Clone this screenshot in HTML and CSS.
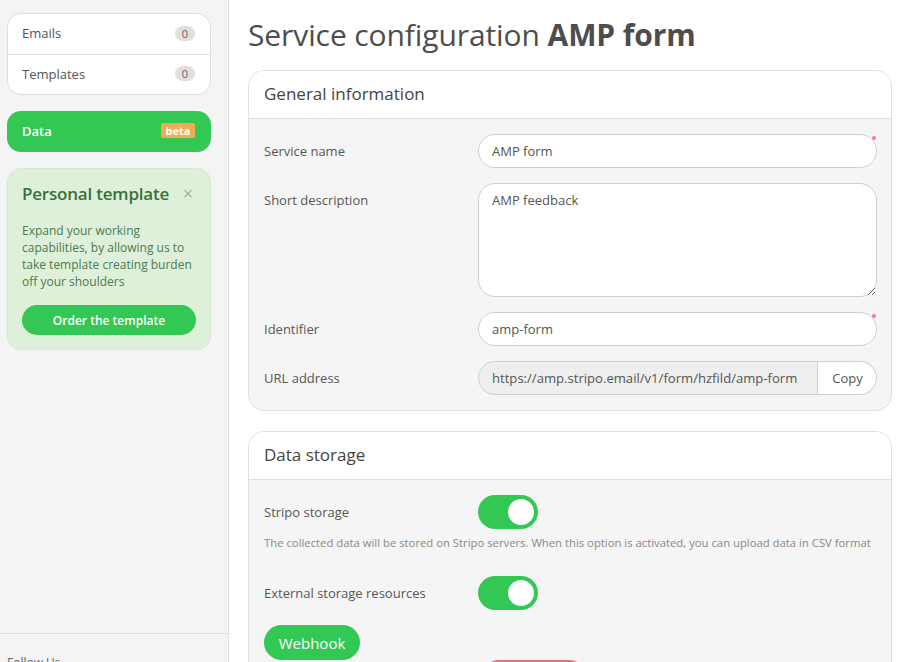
FILE: index.html
```html
<!DOCTYPE html>
<html lang="en">
<head>
<meta charset="utf-8">
<title>Service configuration AMP form</title>
<link rel="stylesheet" href="styles.css">
</head>
<body>
<aside class="sidebar">
  <nav class="nav-card">
    <a class="nav-item">Emails <span class="count">0</span></a>
    <a class="nav-item">Templates <span class="count">0</span></a>
  </nav>
  <a class="nav-data">Data <span class="beta">beta</span></a>
  <div class="promo">
    <div class="promo-head">
      <span class="promo-title">Personal template</span>
      <span class="promo-close">&times;</span>
    </div>
    <p class="promo-text">Expand your working capabilities, by allowing us to take template creating burden off your shoulders</p>
    <button class="promo-btn">Order the template</button>
  </div>
  <div class="sidebar-foot">Follow Us</div>
</aside>
<main class="main">
  <h1 class="page-title">Service configuration <b>AMP form</b></h1>

  <section class="card">
    <header class="card-head">General information</header>
    <div class="card-body form">
      <label class="lbl">Service name</label>
      <div class="field req"><input class="inp" value="AMP form"></div>

      <label class="lbl">Short description</label>
      <div class="field"><textarea class="inp area">AMP feedback</textarea></div>

      <label class="lbl">Identifier</label>
      <div class="field req"><input class="inp" value="amp-form"></div>

      <label class="lbl">URL address</label>
      <div class="field group">
        <input class="inp inp-dis" value="https://amp.stripo.email/v1/form/hzfild/amp-form" disabled>
        <button class="copy">Copy</button>
      </div>
    </div>
  </section>

  <section class="card">
    <header class="card-head">Data storage</header>
    <div class="card-body">
      <div class="form">
        <label class="lbl">Stripo storage</label>
        <div class="field"><span class="toggle on"><span class="knob"></span></span></div>
      </div>
      <p class="hint">The collected data will be stored on Stripo servers. When this option is activated, you can upload data in CSV format</p>
      <div class="form ext">
        <label class="lbl">External storage resources</label>
        <div class="field"><span class="toggle on"><span class="knob"></span></span></div>
      </div>
      <div class="tabs">
        <button class="tab-btn">Webhook</button>
      </div>
      <div class="form">
        <span class="lbl"></span>
        <div class="field"><button class="danger-btn" aria-label="Remove"></button></div>
      </div>
    </div>
  </section>
</main>
</body>
</html>
```
FILE: styles.css
```css
* { box-sizing: border-box; }
html, body { height: 100%; }
body {
  margin: 0;
  display: flex;
  font-family: "Open Sans", "Noto Sans", sans-serif;
  color: #555;
  background: #fff;
  overflow: hidden;
}
.sidebar {
  width: 229px;
  flex: none;
  height: 100vh;
  background: #f4f4f4;
  border-right: 1px solid #e2e2e2;
  padding: 13px 17px 0 7px;
  display: flex;
  flex-direction: column;
}
.nav-card {
  background: #fff;
  border: 1px solid #dedede;
  border-radius: 14px;
  overflow: hidden;
}
.nav-item {
  display: flex;
  align-items: center;
  justify-content: space-between;
  height: 40px;
  padding: 0 15px 2px 14px;
  font-size: 13px;
  color: #555;
}
.nav-item + .nav-item { border-top: 1px solid #e0e0e0; }
.count {
  min-width: 20px;
  height: 15px;
  line-height: 15px;
  border-radius: 8px;
  background: #e0e0e0;
  color: #666;
  font-size: 11px;
  text-align: center;
}
.nav-data {
  margin-top: 16px;
  height: 41px;
  border-radius: 14px;
  background: #33c753;
  color: #fff;
  font-size: 13px;
  font-weight: 600;
  display: flex;
  align-items: center;
  justify-content: space-between;
  padding: 0 16px 2px 15px;
}
.beta {
  background: #eead52;
  color: #fff;
  font-size: 11px;
  font-weight: 700;
  width: 34px;
  height: 15px;
  line-height: 15px;
  text-align: center;
  border-radius: 2px;
}
.promo {
  margin-top: 16px;
  background: #dff0da;
  border: 1px solid #d5e9cf;
  border-radius: 14px;
  padding: 13px 14px 14px;
}
.promo-head {
  display: flex;
  align-items: center;
  justify-content: space-between;
  height: 22px;
}
.promo-title {
  font-size: 17px;
  font-weight: 600;
  color: #3a703b;
  letter-spacing: -0.2px;
}
.promo-close {
  font-size: 18px;
  color: #a4b0a4;
  line-height: 1;
  margin-right: 3px;
}
.promo-text {
  margin: 18px 0 0;
  font-size: 12px;
  line-height: 17px;
  color: #4b7b4c;
}
.promo-btn {
  margin-top: 15px;
  width: 100%;
  height: 30px;
  border: 0;
  border-radius: 15px;
  background: #33c753;
  color: #fff;
  font-family: inherit;
  font-size: 12px;
  font-weight: 600;
}
.sidebar-foot {
  margin-top: auto;
  margin-left: -7px;
  margin-right: -17px;
  border-top: 1px solid #e0e0e0;
  height: 29px;
  padding: 20px 0 0 7px;
  font-size: 12px;
  color: #666;
  overflow: hidden;
}
.main {
  flex: 1;
  padding: 0 17px 0 19px;
  min-width: 0;
}
.page-title {
  margin: 0 0 16px;
  padding-top: 16px;
  font-size: 30px;
  line-height: 38px;
  font-weight: 400;
  color: #4d4d4d;
  letter-spacing: -0.1px;
}
.page-title b { font-weight: 700; }
.card {
  border: 1px solid #e0e0e0;
  border-radius: 16px;
  overflow: hidden;
  background: #f5f5f5;
  margin-bottom: 20px;
}
.card-head {
  height: 48px;
  display: flex;
  align-items: center;
  padding: 0 15px 2px;
  background: #fff;
  border-bottom: 1px solid #e0e0e0;
  font-size: 17px;
  font-weight: 500;
  color: #444;
}
.card-body { padding: 15px 14px 15px 15px; }
.form {
  display: grid;
  grid-template-columns: 214px 1fr;
  row-gap: 15px;
}
.lbl {
  font-size: 13px;
  line-height: 34px;
  color: #555;
  align-self: start;
}
.field { position: relative; }
.req::after {
  content: "";
  position: absolute;
  right: 1px;
  top: 2px;
  width: 4px;
  height: 4px;
  border-radius: 50%;
  background: #f07c7c;
}
.inp {
  display: block;
  width: 100%;
  height: 34px;
  border: 1px solid #cfcfcf;
  border-radius: 17px;
  background: #fff;
  padding: 0 13px;
  font-family: inherit;
  font-size: 13px;
  color: #555;
  outline: none;
}
.area {
  height: 114px;
  padding: 8px 13px;
  line-height: 17px;
  resize: vertical;
}
.group { display: flex; }
.inp-dis {
  flex: 1;
  background: #eee;
  border-radius: 17px 0 0 17px;
  color: #555;
  font-size: 13.1px;
}
.copy {
  width: 59px;
  height: 34px;
  border: 1px solid #cfcfcf;
  border-left: 0;
  border-radius: 0 17px 17px 0;
  background: #fff;
  font-family: inherit;
  font-size: 13px;
  color: #555;
  padding: 0 0 0 1px;
}
.toggle {
  display: flex;
  align-items: center;
  justify-content: flex-end;
  width: 60px;
  height: 34px;
  border-radius: 17px;
  background: #33c753;
  padding: 0 4px;
}
.knob {
  width: 26px;
  height: 26px;
  border-radius: 50%;
  background: #fff;
}
.hint {
  margin: 6px 0 0;
  font-size: 11.3px;
  line-height: 16px;
  color: #888;
}
.ext { margin-top: 25px; }
.tabs {
  margin-top: 15px;
  display: flex;
}
.tab-btn {
  height: 35px;
  width: 96px;
  border: 0;
  border-radius: 18px;
  background: #33c753;
  color: #fff;
  font-family: inherit;
  font-size: 15px;
  font-weight: 500;
}
.danger-btn {
  margin-left: 4px;
  width: 104px;
  height: 34px;
  border: 0;
  border-radius: 17px;
  background: #e57373;
}
```
